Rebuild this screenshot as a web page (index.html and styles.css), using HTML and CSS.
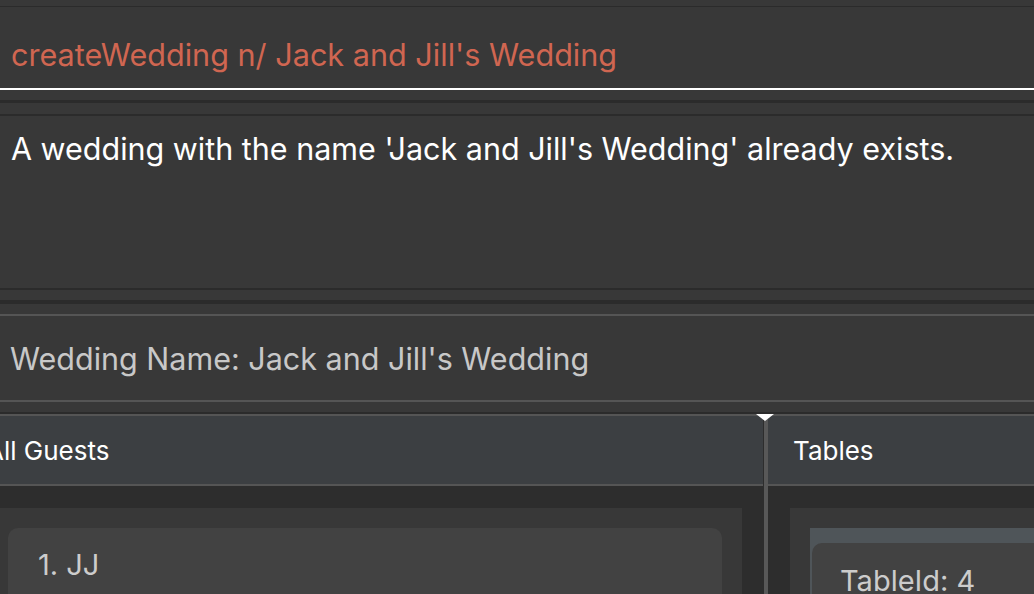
FILE: index.html
```html
<!DOCTYPE html>
<html>
<head>
<meta charset="utf-8">
<link rel="stylesheet" href="styles.css">
</head>
<body>
<div class="app">
  <div class="gap gap-top"></div>
  <div class="line dark1"></div>
  <div class="command"><span class="cmd-text">createWedding n/ Jack and Jill's Wedding</span></div>
  <div class="line white"></div>
  <div class="gap gap10"></div>
  <div class="line dark3"></div>
  <div class="gap gap11"></div>
  <div class="line dark2"></div>
  <div class="result"><span class="result-text">A wedding with the name 'Jack and Jill's Wedding' already exists.</span></div>
  <div class="line dark2"></div>
  <div class="gap gap10"></div>
  <div class="line dark4"></div>
  <div class="gap gap10"></div>
  <div class="line grey"></div>
  <div class="wedding"><span class="wedding-text">Wedding Name: Jack and Jill's Wedding</span></div>
  <div class="line grey"></div>
  <div class="gap gap10"></div>
  <div class="line dark2"></div>
  <div class="line grey"></div>
  <div class="split">
    <div class="pane pane-left">
      <div class="pane-header header-left"><span class="pane-title title-left">All Guests</span></div>
      <div class="pane-body body-left">
        <div class="list list-left">
          <div class="card guest-card"><span class="card-text">1. JJ</span></div>
        </div>
      </div>
    </div>
    <div class="divider"><span class="divider-tip"></span></div>
    <div class="pane pane-right">
      <div class="pane-header"><span class="pane-title">Tables</span></div>
      <div class="pane-body body-right">
        <div class="list list-right">
          <div class="table-band">
            <div class="card table-card"><span class="card-text">TableId: 4</span></div>
          </div>
        </div>
      </div>
    </div>
  </div>
</div>
</body>
</html>
```

FILE: styles.css
```css
* { box-sizing: border-box; }
html, body {
  margin: 0;
  padding: 0;
  background: #383838;
  overflow: hidden;
}
body {
  width: 1034px;
  height: 594px;
  font-family: Inter, "Open Sans", sans-serif;
}
.app {
  display: flex;
  flex-direction: column;
  width: 1034px;
  height: 594px;
  overflow: hidden;
}
.gap { flex: none; }
.gap-top { height: 6px; }
.gap10 { height: 10px; }
.gap11 { height: 11px; }
.line { flex: none; width: 100%; }
.dark1 { height: 1px; background: #2b2b2b; }
.dark2 { height: 2px; background: #2b2b2b; }
.dark3 { height: 3px; background: #2b2b2b; }
.dark4 { height: 4px; background: #2b2b2b; }
.white { height: 2px; background: #ffffff; }
.grey { height: 2px; background: #555555; }

.command {
  flex: none;
  height: 81px;
  display: flex;
  align-items: center;
  padding-left: 11px;
  padding-top: 14px;
}
.cmd-text {
  color: #d06651;
  font-size: 30.6px;
  white-space: nowrap;
}
.result {
  flex: none;
  height: 172px;
  padding: 14px 0 0 11px;
}
.result-text {
  color: #ffffff;
  font-size: 30.5px;
  white-space: nowrap;
}
.wedding {
  flex: none;
  height: 84px;
  display: flex;
  align-items: center;
  padding-left: 10px;
}
.wedding-text {
  color: #c8c8c8;
  font-size: 30.5px;
  white-space: nowrap;
}
.split {
  flex: 1;
  display: flex;
  min-height: 0;
}
.pane {
  display: flex;
  flex-direction: column;
  overflow: hidden;
}
.pane-left { width: 763px; flex: none; }
.pane-right { flex: 1; }
.pane-header {
  flex: none;
  height: 70px;
  background: #3c3f42;
  border-bottom: 2px solid #555555;
  display: flex;
  align-items: center;
  padding-left: 25px;
}
.pane-title {
  color: #ffffff;
  font-size: 26px;
  white-space: nowrap;
}
.header-left { padding-left: 0; }
.title-left { margin-left: -14px; }
.pane-body {
  flex: 1;
  background: #2d2d2d;
  padding-top: 22px;
}
.body-left { padding-right: 21px; }
.body-right { padding-left: 22px; }
.list {
  height: 100%;
  background: #383838;
  padding-top: 20px;
}
.list-left { padding-left: 8px; padding-right: 20px; }
.list-right { padding-left: 20px; }
.card {
  background: #424242;
  border-radius: 10px 10px 0 0;
  height: 100px;
}
.guest-card {
  padding: 19px 0 0 30px;
}
.table-band {
  background: #4f5559;
  padding-top: 15px;
  padding-left: 2px;
  height: 100px;
}
.table-card {
  border-radius: 10px 0 0 0;
  padding: 20px 0 0 28px;
}
.card-text {
  color: #cccccc;
  font-size: 29px;
  white-space: nowrap;
}
.divider {
  flex: none;
  width: 5px;
  background: #2d2d2d;
  position: relative;
  display: flex;
  justify-content: center;
}
.divider::before {
  content: "";
  display: block;
  width: 4px;
  height: 100%;
  background: #585858;
}
.divider-tip {
  position: absolute;
  top: -2px;
  left: -7px;
  width: 0;
  height: 0;
  border-left: 9px solid transparent;
  border-right: 9px solid transparent;
  border-top: 7px solid #ffffff;
}
```
